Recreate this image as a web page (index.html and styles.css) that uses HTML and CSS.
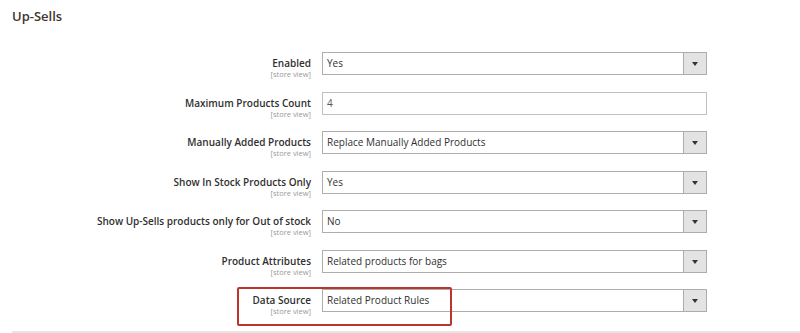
FILE: index.html
```html
<!DOCTYPE HTML>
<html>

    <head>
        <meta name="viewport" content="width=device-width, initial-scale=1">
        <title>Up-Sells</title>
        <link rel="stylesheet" href="styles.css">
    </head>

    <body>
        <h2 class="section-title">Up-Sells</h2>
        <div class="fields">
            <div class="field">
                <div class="label"><span>Enabled</span><small>[store view]</small></div>
                <div class="control select"><span>Yes</span><i class="arrow"></i></div>
            </div>
            <div class="field">
                <div class="label"><span>Maximum Products Count</span><small>[store view]</small></div>
                <div class="control text">4</div>
            </div>
            <div class="field">
                <div class="label"><span>Manually Added Products</span><small>[store view]</small></div>
                <div class="control select"><span>Replace Manually Added Products</span><i class="arrow"></i></div>
            </div>
            <div class="field">
                <div class="label"><span>Show In Stock Products Only</span><small>[store view]</small></div>
                <div class="control select"><span>Yes</span><i class="arrow"></i></div>
            </div>
            <div class="field">
                <div class="label"><span>Show Up-Sells products only for Out of stock</span><small>[store view]</small></div>
                <div class="control select"><span>No</span><i class="arrow"></i></div>
            </div>
            <div class="field">
                <div class="label"><span>Product Attributes</span><small>[store view]</small></div>
                <div class="control select"><span>Related products for bags</span><i class="arrow"></i></div>
            </div>
            <div class="field highlighted">
                <div class="label"><span>Data Source</span><small>[store view]</small></div>
                <div class="control select"><span>Related Product Rules</span><i class="arrow"></i></div>
                <div class="marker"></div>
            </div>
        </div>
        <div class="divider"></div>
    </body>

</html>
```

FILE: styles.css
```css
body {
    margin: 0;
    background: #ffffff;
    font-family: "Open Sans", "Noto Sans", Arial, sans-serif;
    color: #303030;
}

.section-title {
    font-size: 13px;
    font-weight: 600;
    line-height: 20px;
    color: #41362f;
    margin: 0;
    padding: 6px 12px 0 12px;
}

.fields {
    margin-top: 26px;
}

.field {
    display: flex;
    gap: 11px;
    height: 23px;
    margin-bottom: 16.5px;
}

.field:last-child {
    margin-bottom: 0;
}

.label {
    width: 311px;
    text-align: right;
    padding-top: 5px;
    display: flex;
    flex-direction: column;
    align-items: flex-end;
}

.label span {
    font-size: 10px;
    font-weight: 600;
    line-height: 13px;
    color: #303030;
}

.label small {
    font-size: 7.5px;
    line-height: 9px;
    color: #999999;
}

.control {
    box-sizing: border-box;
    width: 385px;
    height: 23px;
    border: 1px solid #adadad;
    font-size: 10px;
    line-height: 21px;
    padding-left: 4px;
    display: flex;
    align-items: center;
    background: #ffffff;
}

.control.text {
    color: #555555;
    border-color: #c2c2c2;
}

.control.select span {
    flex: 1;
}

.arrow {
    box-sizing: border-box;
    width: 24px;
    height: 23px;
    margin: -1px -1px -1px 0;
    border: 1px solid #adadad;
    background: #e3e3e3;
    display: flex;
    align-items: center;
    justify-content: center;
}

.arrow::after {
    content: "";
    border-left: 3px solid transparent;
    border-right: 3px solid transparent;
    border-top: 4px solid #333333;
    margin-top: 1px;
}

.highlighted {
    position: relative;
}

.marker {
    position: absolute;
    left: 237px;
    top: -2px;
    width: 215px;
    height: 39px;
    box-sizing: border-box;
    border: 2px solid #b9352d;
    border-radius: 2px;
}

.divider {
    margin: 19px 0 0 12px;
    border-top: 2px solid #e6e6e6;
}
```
